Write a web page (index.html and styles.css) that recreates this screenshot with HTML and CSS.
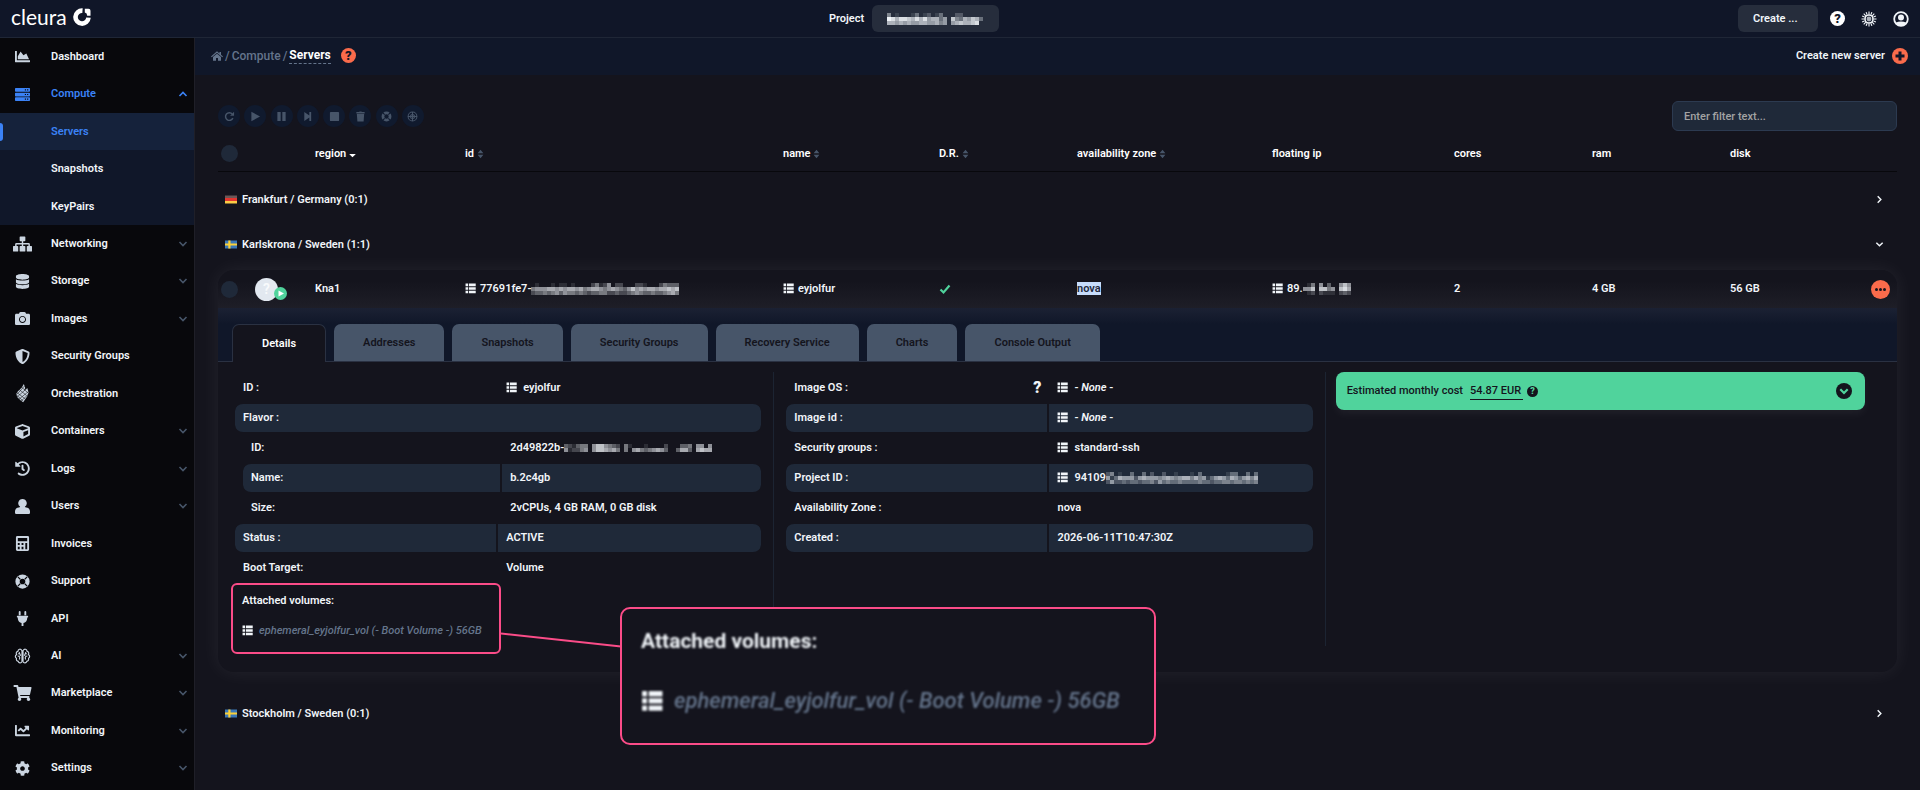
FILE: index.html
```html
<!DOCTYPE html>
<html lang="en">
<head>
    <title>Servers - Cleura</title>
    <meta charset="utf-8">

    <link rel="stylesheet" href="styles.css">
</head>

<body>
<svg class="sprite" aria-hidden="true">
    <symbol id="i-area" viewBox="0 0 512 512"><path d="M500 384c6.600 0 12 5.400 12 12v40c0 6.600-5.400 12-12 12H12c-6.600 0-12-5.400-12-12V76c0-6.600 5.400-12 12-12h40c6.600 0 12 5.400 12 12v308h436zM372.700 159.500L288 216l-85.300-113.700c-5.100-6.800-15.500-6.300-19.900 1L96 248v104h384l-89.900-187.800c-3.200-6.500-11.400-8.700-17.400-4.700z"/></symbol>
    <symbol id="i-line" viewBox="0 0 512 512"><path d="M496 384H64V80c0-8.840-7.160-16-16-16H16C7.160 64 0 71.160 0 80v336c0 17.670 14.330 32 32 32h464c8.840 0 16-7.160 16-16v-32c0-8.840-7.160-16-16-16zM464 96H345.940c-21.380 0-32.090 25.850-16.970 40.970l32.400 32.400L288 242.750l-73.370-73.370c-12.500-12.500-32.760-12.500-45.250 0l-68.690 68.690c-6.250 6.250-6.250 16.380 0 22.630l22.620 22.620c6.250 6.250 16.380 6.250 22.630 0L192 237.250l73.370 73.370c12.500 12.500 32.760 12.500 45.250 0l96-96 32.400 32.400c15.120 15.120 40.970 4.410 40.970-16.970V112c.010-8.840-7.150-16-15.990-16z"/></symbol>
    <symbol id="i-server" viewBox="0 0 512 512"><path fill-rule="evenodd" d="M24 32h464q24 0 24 24v80q0 24-24 24H24q-24 0-24-24V56q0-24 24-24zM24 192h464q24 0 24 24v80q0 24-24 24H24q-24 0-24-24v-80q0-24 24-24zM24 352h464q24 0 24 24v80q0 24-24 24H24q-24 0-24-24v-80q0-24 24-24zM336 76v40h40V76zM412 76v40h40V76zM336 236v40h40v-40zM412 236v40h40v-40zM336 396v40h40v-40zM412 396v40h40v-40z"/></symbol>
    <symbol id="i-sitemap" viewBox="0 0 640 512"><path d="M248 0h144q24 0 24 24v112q0 24-24 24h-48v64h180q44 0 44 44v52h48q24 0 24 24v144q0 24-24 24H488q-24 0-24-24V344q0-24 24-24h32v-48H344v48h48q24 0 24 24v144q0 24-24 24H248q-24 0-24-24V344q0-24 24-24h48v-48H120v48h32q24 0 24 24v144q0 24-24 24H24q-24 0-24-24V344q0-24 24-24h48v-52q0-44 44-44h180v-64h-48q-24 0-24-24V24q0-24 24-24z"/></symbol>
    <symbol id="i-database" viewBox="0 0 448 512"><path d="M448 73.143v45.714C448 159.143 347.667 192 224 192S0 159.143 0 118.857V73.143C0 32.857 100.333 0 224 0s224 32.857 224 73.143zM448 176v102.857C448 319.143 347.667 352 224 352S0 319.143 0 278.857V176c48.125 33.143 136.208 48.572 224 48.572S399.874 209.143 448 176zm0 160v102.857C448 479.143 347.667 512 224 512S0 479.143 0 438.857V336c48.125 33.143 136.208 48.572 224 48.572S399.874 369.143 448 336z"/></symbol>
    <symbol id="i-camera" viewBox="0 0 512 512"><path d="M512 144v288c0 26.500-21.500 48-48 48H48c-26.500 0-48-21.500-48-48V144c0-26.500 21.500-48 48-48h88l12.300-32.900c7-18.700 24.900-31.100 44.900-31.100h125.500c20 0 37.900 12.400 44.900 31.100L376 96h88c26.500 0 48 21.500 48 48zM376 288c0-66.200-53.800-120-120-120s-120 53.800-120 120 53.800 120 120 120 120-53.800 120-120zm-32 0c0 48.500-39.500 88-88 88s-88-39.500-88-88 39.500-88 88-88 88 39.500 88 88z"/></symbol>
    <symbol id="i-shield" viewBox="0 0 512 512"><path d="M466.500 83.700l-192-80a48.150 48.150 0 0 0-36.900 0l-192 80C27.700 91.100 16 108.600 16 128c0 198.500 114.500 335.700 221.500 380.300 11.800 4.900 25.100 4.900 36.900 0C360.100 472.600 496 349.300 496 128c0-19.400-11.700-36.900-29.500-44.300zM256.100 446.300l-.1-381 175.900 73.300c-3.300 151.400-82.100 261.100-175.800 307.700z"/></symbol>
    <symbol id="i-heat" viewBox="0 0 20 28"><path d="M12 0l2 6-2 4 5-4 2 6-2 6-6 9-4-3-5-5-1-5 2-3 6-6z"/><path d="M5 8l11 9M8 4l10 9M1 12l13 10M2 17l9 8M1 20L17 6M4 23L19 11M7 26l12-11M2 15L13 3" fill="none" stroke="#08080c" stroke-width=".8"/></symbol>
    <symbol id="i-cube" viewBox="0 0 512 512"><path d="M239.100 6.300l-208 78c-18.700 7-31.100 25-31.100 45v225.100c0 18.200 10.300 34.800 26.500 42.900l208 104c13.500 6.800 29.400 6.800 42.900 0l208-104c16.300-8.100 26.500-24.800 26.500-42.900V129.300c0-20-12.400-37.900-31.100-44.900l-208-78C262 2.200 250 2.200 239.100 6.300zM256 68.400l192 72v1.100l-192 78-192-78v-1.100l192-72zm32 356V275.500l160-65v133.900l-160 80z"/></symbol>
    <symbol id="i-history" viewBox="0 0 512 512"><path d="M504 255.531c.253 136.640-111.180 248.372-247.820 248.468-59.015.042-113.223-20.530-155.822-54.911-11.077-8.940-11.905-25.541-1.839-35.607l11.267-11.267c8.609-8.609 22.353-9.551 31.891-1.984C173.062 425.135 212.781 440 256 440c101.705 0 184-82.311 184-184 0-101.705-82.311-184-184-184-48.814 0-93.149 18.969-126.068 49.932l50.754 50.754c10.080 10.080 2.941 27.314-11.313 27.314H24c-8.837 0-16-7.163-16-16V38.627c0-14.254 17.234-21.393 27.314-11.314l49.372 49.372C129.209 34.136 189.552 8 256 8c136.810 0 247.747 110.780 248 247.531zm-180.912 78.784l9.823-12.630c8.138-10.463 6.253-25.542-4.210-33.679L288 256.349V152c0-13.255-10.745-24-24-24h-16c-13.255 0-24 10.745-24 24v135.651l65.409 50.874c10.463 8.137 25.541 6.253 33.679-4.210z"/></symbol>
    <symbol id="i-user" viewBox="0 0 512 512"><path d="M256 0a144 144 0 0 1 80 264q10 24 50 28c80 10 126 60 126 136v44q0 40-40 40H40q-40 0-40-40v-44c0-76 46-126 126-136q40-4 50-28A144 144 0 0 1 256 0z"/></symbol>
    <symbol id="i-calc" viewBox="0 0 448 512"><path fill-rule="evenodd" d="M48 0h352q48 0 48 48v416q0 48-48 48H48q-48 0-48-48V48Q0 0 48 0zM64 64v112h320V64zM64 240v64h64v-64zM192 240v64h64v-64zM320 240v208h64V240zM64 368v80h64v-80zM192 368v80h64v-80z"/></symbol>
    <symbol id="i-ring" viewBox="0 0 16 16"><circle cx="8" cy="8" r="5.300" fill="none" stroke="currentColor" stroke-width="4.600"/><path d="M3 3l2.600 2.600M13 3l-2.600 2.600M3 13l2.600-2.600M13 13l-2.600-2.600" stroke="#08080c" stroke-width="1.200"/></symbol>
    <symbol id="i-plug" viewBox="0 0 384 512"><path d="M96 0q32 0 32 32v112H64V32Q64 0 96 0zM288 0q32 0 32 32v112h-64V32q0-32 32-32zM16 160h352q16 0 16 16v32q0 16-16 16h-16v32c0 78-55 142-128 157v99h-64v-99C87 398 32 334 32 256v-32H16q-16 0-16-16v-32q0-16 16-16z"/></symbol>
    <symbol id="i-brain" viewBox="0 0 18 18"><g fill="none" stroke="currentColor" stroke-width="1.300"><path d="M8.400 2.500v13M9.600 2.500v13M8.400 3C7 .5 4 1 4 3.500 2 4 1.500 6 2.400 7.300.5 8.500.5 10.500 2.200 11.500c-.5 2 .5 3.300 2 3.500.6 2.200 3.200 2.400 4.200.500M9.600 3C11 .5 14 1 14 3.500c2 .5 2.500 2.500 1.600 3.800 1.900 1.200 1.900 3.200.2 4.200.5 2-.5 3.300-2 3.500-.6 2.200-3.200 2.400-4.200.500"/><path d="M5.500 4.500c-.5 2 1.500 2 1 4.500M3.500 9c2 0 3 1 2 4M12.500 4.500c.5 2-1.500 2-1 4.500M14.500 9c-2 0-3 1-2 4M4 6.500h2M12 6.500h2"/></g></symbol>
    <symbol id="i-cart" viewBox="0 0 576 512"><path d="M528.120 301.319l47.273-208C578.806 78.301 567.391 64 551.990 64H159.208l-9.166-44.810C147.758 8.021 137.930 0 126.529 0H24C10.745 0 0 10.745 0 24v16c0 13.255 10.745 24 24 24h69.883l70.248 343.435C147.325 417.100 136 435.222 136 456c0 30.928 25.072 56 56 56s56-25.072 56-56c0-15.674-6.447-29.835-16.824-40h209.647C430.447 426.165 424 440.326 424 456c0 30.928 25.072 56 56 56s56-25.072 56-56c0-22.172-12.888-41.332-31.579-50.405l5.517-24.276c3.413-15.018-8.002-29.319-23.403-29.319H218.117l-6.545-32h293.145c11.206 0 20.920-7.754 23.403-18.681z"/></symbol>
    <symbol id="i-cog" viewBox="0 0 512 512"><path d="M487.400 315.700l-42.600-24.600c4.300-23.200 4.300-47 0-70.200l42.600-24.600c4.900-2.800 7.100-8.600 5.500-14-11.100-35.600-30-67.800-54.700-94.600-3.800-4.100-10-5.100-14.800-2.300L380.800 110c-17.900-15.400-38.500-27.300-60.800-35.100V25.800c0-5.600-3.900-10.500-9.400-11.700-36.700-8.200-74.300-7.800-109.200 0-5.500 1.200-9.400 6.100-9.400 11.700V75c-22.200 7.900-42.800 19.800-60.800 35.100L88.700 85.500c-4.900-2.800-11-1.900-14.800 2.300-24.700 26.700-43.600 58.900-54.700 94.600-1.700 5.400.6 11.200 5.500 14L67.300 221c-4.300 23.200-4.300 47 0 70.200l-42.600 24.600c-4.900 2.800-7.100 8.600-5.500 14 11.100 35.600 30 67.800 54.700 94.600 3.800 4.100 10 5.100 14.800 2.300l42.600-24.600c17.900 15.400 38.500 27.300 60.800 35.100v49.200c0 5.600 3.900 10.500 9.400 11.700 36.700 8.200 74.300 7.800 109.200 0 5.500-1.200 9.400-6.100 9.400-11.700v-49.200c22.200-7.900 42.800-19.800 60.800-35.100l42.600 24.600c4.900 2.800 11 1.900 14.800-2.300 24.700-26.700 43.600-58.900 54.700-94.600 1.500-5.500-.7-11.300-5.600-14.100zM256 336c-44.100 0-80-35.900-80-80s35.900-80 80-80 80 35.900 80 80-35.900 80-80 80z"/></symbol>
    <symbol id="i-chev" viewBox="0 0 10 10"><path d="M1.500 3l3.500 3.500L8.500 3" fill="none" stroke="currentColor" stroke-width="1.600"/></symbol>
    <symbol id="i-list" viewBox="0 0 20 20"><path d="M1 1h4.500v4.800H1zM7 1h12.500v4.800H7zM1 7.500h4.500v4.800H1zM7 7.500h12.500v4.800H7zM1 14h4.500v4.800H1zM7 14h12.500v4.800H7z"/></symbol>
    <symbol id="i-home" viewBox="0 0 18 16"><path d="M9 1L0 8.700l1.100 1.200L9 3.200l7.900 6.700L18 8.700 15 6.200V2h-2.300v2.200zM9 4.500L3 9.600V15h4.500v-4h3v4H15V9.600z"/></symbol>
    <symbol id="i-redo" viewBox="0 0 12 12"><path d="M9.700 7.800A4.200 4.200 0 1 1 9 3.200" fill="none" stroke="currentColor" stroke-width="1.600"/><path d="M11 .8v4.400H6.600z"/></symbol>
    <symbol id="i-play" viewBox="0 0 12 12"><path d="M1.500 .8L11 6l-9.500 5.200z"/></symbol>
    <symbol id="i-pause" viewBox="0 0 12 12"><path d="M1.500 1h3.600v10H1.500zM6.900 1h3.600v10H6.900z"/></symbol>
    <symbol id="i-step" viewBox="0 0 12 12"><path d="M2.500 1l5.500 4V1h2v10H8V7l-5.500 4z"/></symbol>
    <symbol id="i-stop" viewBox="0 0 12 12"><rect x="1" y="1" width="10" height="10" rx="1"/></symbol>
    <symbol id="i-trash" viewBox="0 0 12 12"><path d="M1.500 1.200h3L5 .500h2l.500.700h3V2.700h-9zM2 3.400h8l-.6 8.100H2.600z"/></symbol>
    <symbol id="i-ring2" viewBox="0 0 12 12"><circle cx="6" cy="6" r="3.900" fill="none" stroke="currentColor" stroke-width="3"/><path d="M2 2l2 2M10 2L8 4M2 10l2-2M10 10L8 8" stroke="#101a2e" stroke-width="1.200"/></symbol>
    <symbol id="i-globe" viewBox="0 0 12 12"><g fill="none" stroke="currentColor" stroke-width="1.100"><circle cx="6" cy="6" r="4.800"/><circle cx="6" cy="6" r="2.200"/><path d="M6 1v10M1 6h10"/></g></symbol>
    <symbol id="i-sort" viewBox="0 0 8 12"><path d="M4 1l3.500 4h-7zM4 11L.5 7h7z"/></symbol>
    <symbol id="i-down" viewBox="0 0 8 12"><path d="M4 10L0 6h8z"/></symbol>
    <symbol id="i-check" viewBox="0 0 12 12"><path d="M1.500 6.500l3 3 6-7" fill="none" stroke="currentColor" stroke-width="2.200"/></symbol>
    <symbol id="i-sun" viewBox="0 0 16 16"><circle cx="8" cy="8" r="4" fill="none" stroke="currentColor" stroke-width="1.600"/><circle cx="8" cy="8" r="2.400" opacity=".7"/><path d="M8 .5v3M8 12.500v3M.500 8h3M12.500 8h3M2.700 2.700l2.100 2.100M11.200 11.200l2.100 2.100M2.700 13.300l2.100-2.100M11.200 4.800l2.100-2.100M5.100 1.100l.9 2.400M10 12.500l.9 2.400M1.100 10.900l2.400-.9M12.500 6l2.400-.9M1.100 5.100l2.400.9M12.500 10l2.400.9M5.100 14.900l.9-2.400M10 3.500l.9-2.400" stroke="currentColor" stroke-width="1.100"/></symbol>
    <symbol id="i-account" viewBox="0 0 16 16"><circle cx="8" cy="8" r="6.800" fill="none" stroke="currentColor" stroke-width="1.800"/><circle cx="8" cy="6.500" r="3"/><path d="M2.500 11.800q5.500-2.500 11 0Q12 15 8 15t-5.500-3.200z"/></symbol>
    <symbol id="i-plus" viewBox="0 0 16 16"><circle cx="8" cy="8" r="8" fill="#fa6b4b"/><path d="M8 3.500v9M3.500 8h9" stroke="#101628" stroke-width="3"/></symbol>
    <symbol id="i-expand" viewBox="0 0 16 16"><circle cx="8" cy="8" r="8"/><path d="M4.300 6.300L8 10l3.700-3.700" fill="none" stroke="#50d39c" stroke-width="2.200"/></symbol>
    <symbol id="i-de" viewBox="0 0 12 9"><path fill="#6b5757" d="M0 .5h12v3H0z"/><path fill="#e3352f" d="M0 3h12v3H0z"/><path fill="#fbcb45" d="M0 6h12v2.500H0z"/></symbol>
    <symbol id="i-se" viewBox="0 0 12 9"><path fill="#3a78b8" d="M0 .5h12v8H0z"/><path fill="#fbd037" d="M3.300 .5h2.200v8H3.300zM0 3.400h12v2.200H0z"/></symbol>
</svg>

<header class="topbar">
    <a class="logo" href="#">cleura
        <svg class="logo_mark" viewBox="0 0 18 18"><path d="M9.500 2.600A6.500 6.500 0 1 0 15.500 9.600" fill="none" stroke="#fff" stroke-width="4.600"/><path d="M11.800.8h3.700q2 0 2 2v5h-3.300q0-2.800-2.400-3.200z" fill="#fff"/></svg>
    </a>
    <div class="project">
        <span id="project_label">Project</span>
        <button type="button" class="top_button" aria-labelledby="project_label">
            <span class="mosaic" data-rows="401000130120130002200000 986887686856635074365763 665656556655645056766780"></span>
        </button>
    </div>
    <div class="top_actions">
        <button type="button" class="top_button create">Create ...</button>
        <div class="top_icons">
            <a class="help" href="#">?</a>
            <button type="button" class="plain" aria-label="Theme"><svg class="ic16"><use href="#i-sun"/></svg></button>
            <button type="button" class="plain" aria-label="Account"><svg class="ic16"><use href="#i-account"/></svg></button>
        </div>
    </div>
</header>

<div class="layout">
    <nav class="sidebar">
        <ul class="menu">
            <li><a href="#"><svg><use href="#i-area"/></svg>Dashboard</a></li>
            <li class="open">
                <a href="#"><svg><use href="#i-server"/></svg>Compute<svg class="chev"><use href="#i-chev"/></svg></a>
                <ul class="submenu">
                    <li class="active"><a href="#">Servers</a></li>
                    <li><a href="#">Snapshots</a></li>
                    <li><a href="#">KeyPairs</a></li>
                </ul>
            </li>
            <li><a href="#"><svg class="wide"><use href="#i-sitemap"/></svg>Networking<svg class="chev"><use href="#i-chev"/></svg></a></li>
            <li><a href="#"><svg><use href="#i-database"/></svg>Storage<svg class="chev"><use href="#i-chev"/></svg></a></li>
            <li><a href="#"><svg><use href="#i-camera"/></svg>Images<svg class="chev"><use href="#i-chev"/></svg></a></li>
            <li><a href="#"><svg><use href="#i-shield"/></svg>Security Groups</a></li>
            <li><a href="#"><svg class="wide tall"><use href="#i-heat"/></svg>Orchestration</a></li>
            <li><a href="#"><svg><use href="#i-cube"/></svg>Containers<svg class="chev"><use href="#i-chev"/></svg></a></li>
            <li><a href="#"><svg><use href="#i-history"/></svg>Logs<svg class="chev"><use href="#i-chev"/></svg></a></li>
            <li><a href="#"><svg><use href="#i-user"/></svg>Users<svg class="chev"><use href="#i-chev"/></svg></a></li>
            <li><a href="#"><svg><use href="#i-calc"/></svg>Invoices</a></li>
            <li><a href="#"><svg><use href="#i-ring"/></svg>Support</a></li>
            <li><a href="#"><svg><use href="#i-plug"/></svg>API</a></li>
            <li><a href="#"><svg class="wide"><use href="#i-brain"/></svg>AI<svg class="chev"><use href="#i-chev"/></svg></a></li>
            <li><a href="#"><svg class="wide"><use href="#i-cart"/></svg>Marketplace<svg class="chev"><use href="#i-chev"/></svg></a></li>
            <li><a href="#"><svg><use href="#i-line"/></svg>Monitoring<svg class="chev"><use href="#i-chev"/></svg></a></li>
            <li><a href="#"><svg><use href="#i-cog"/></svg>Settings<svg class="chev"><use href="#i-chev"/></svg></a></li>
        </ul>
    </nav>

    <main>
        <div class="crumbs">
            <a href="#" aria-label="Home"><svg class="home"><use href="#i-home"/></svg></a>
            <span>/</span>
            <a href="#">Compute</a>
            <span>/</span>
            <a href="#" class="current">Servers</a>
            <a href="#" class="help orange">?</a>
            <a href="#" class="new_server">Create new server <svg class="ic16"><use href="#i-plus"/></svg></a>
        </div>

        <div class="content">
            <div class="toolbar">
                <div class="tools">
                    <button type="button" aria-label="Restart"><svg><use href="#i-redo"/></svg></button>
                    <button type="button" aria-label="Start"><svg><use href="#i-play"/></svg></button>
                    <button type="button" aria-label="Pause"><svg><use href="#i-pause"/></svg></button>
                    <button type="button" aria-label="Resume"><svg><use href="#i-step"/></svg></button>
                    <button type="button" aria-label="Stop"><svg><use href="#i-stop"/></svg></button>
                    <button type="button" aria-label="Delete"><svg><use href="#i-trash"/></svg></button>
                    <button type="button" aria-label="Rescue"><svg><use href="#i-ring2"/></svg></button>
                    <button type="button" aria-label="Unrescue"><svg><use href="#i-globe"/></svg></button>
                </div>
                <input type="text" class="filter" placeholder="Enter filter text..." aria-label="Filter">
            </div>

            <table class="servers servers_head">
                <colgroup><col class="c_check"><col class="c_region"><col class="c_id"><col class="c_name"><col class="c_dr"><col class="c_zone"><col class="c_ip"><col class="c_num"><col class="c_num"><col class="c_disk"><col class="c_menu"></colgroup>
                <tr>
                    <th><input type="checkbox" class="tick" aria-label="Select all"></th>
                    <th>region <svg class="sort"><use href="#i-down"/></svg></th>
                    <th>id <svg class="sort dim"><use href="#i-sort"/></svg></th>
                    <th>name <svg class="sort dim"><use href="#i-sort"/></svg></th>
                    <th>D.R. <svg class="sort dim"><use href="#i-sort"/></svg></th>
                    <th>availability zone <svg class="sort dim"><use href="#i-sort"/></svg></th>
                    <th>floating ip</th>
                    <th>cores</th>
                    <th>ram</th>
                    <th>disk</th>
                    <th></th>
                </tr>
            </table>

            <div class="regions">
                <button type="button" class="region"><svg class="flag"><use href="#i-de"/></svg>Frankfurt / Germany (0:1)<svg class="arrow side"><use href="#i-chev"/></svg></button>
                <button type="button" class="region"><svg class="flag"><use href="#i-se"/></svg>Karlskrona / Sweden (1:1)<svg class="arrow"><use href="#i-chev"/></svg></button>

                <section class="card">
                    <table class="servers servers_row">
                        <colgroup><col class="c_check"><col class="c_region"><col class="c_id"><col class="c_name"><col class="c_dr"><col class="c_zone"><col class="c_ip"><col class="c_num"><col class="c_num"><col class="c_disk"><col class="c_menu"></colgroup>
                        <tr>
                            <td>
                                <div class="lead">
                                    <input type="checkbox" class="tick" aria-label="Select eyjolfur">
                                    <span class="avatar">?<svg class="running" viewBox="0 0 13 13"><circle cx="6.500" cy="6.500" r="6.500" fill="#50d39c"/><path d="M4.500 3.500L10 6.500l-5.500 3z" fill="#fff"/></svg></span>
                                </div>
                            </td>
                            <td>Kna1</td>
                            <td><svg class="list"><use href="#i-list"/></svg>77691fe7-<span class="mosaic" data-rows="0100010110100002412502200022100024333 4555665656656456654565435756566566767 2334345354434323344223223454334334564"></span></td>
                            <td><svg class="list"><use href="#i-list"/></svg>eyjolfur</td>
                            <td><svg class="check"><use href="#i-check"/></svg></td>
                            <td><span class="marked">nova</span></td>
                            <td><svg class="list"><use href="#i-list"/></svg>89.<span class="mosaic" data-rows="014050300575 557077450786 012021110232"></span></td>
                            <td>2</td>
                            <td>4 GB</td>
                            <td>56 GB</td>
                            <td><button type="button" class="more" aria-label="Actions"><i></i><i></i><i></i></button></td>
                        </tr>
                    </table>

                    <div class="tabs">
                        <button type="button" class="selected">Details</button>
                        <button type="button">Addresses</button>
                        <button type="button">Snapshots</button>
                        <button type="button">Security Groups</button>
                        <button type="button">Recovery Service</button>
                        <button type="button">Charts</button>
                        <button type="button">Console Output</button>
                    </div>

                    <div class="details">
                        <div class="col">
                            <table class="props">
                                <tr><td>ID :</td><td><svg class="list"><use href="#i-list"/></svg>eyjolfur</td></tr>
                                <tr class="band"><td colspan="2" class="full">Flavor :</td></tr>
                                <tr>
                                    <td colspan="2" class="nest">
                                        <table class="props">
                                            <tr><td>ID:</td><td>2d49822b-<span class="mosaic" data-rows="3213440577543204100010000200033405505 5122450577656404056434565300366306766"></span></td></tr>
                                            <tr class="band"><td>Name:</td><td>b.2c4gb</td></tr>
                                            <tr><td>Size:</td><td>2vCPUs, 4 GB RAM, 0 GB disk</td></tr>
                                        </table>
                                    </td>
                                </tr>
                                <tr class="band"><td>Status :</td><td>ACTIVE</td></tr>
                                <tr><td>Boot Target:</td><td>Volume</td></tr>
                            </table>

                            <div class="volumes">
                                <div class="line">Attached volumes:</div>
                                <div class="line"><svg class="list"><use href="#i-list"/></svg><em>ephemeral_eyjolfur_vol (- Boot Volume -) 56GB</em></div>

                                <!-- enlarged copy of the box, tied to it by a line -->
                                <svg class="connector" viewBox="0 0 120 16"><path d="M0 1.500L120 14.500" stroke="#fb4c88" stroke-width="2"/></svg>
                                <div class="callout">
                                    <div class="line title">Attached volumes:</div>
                                    <div class="line"><svg class="list"><use href="#i-list"/></svg><em>ephemeral_eyjolfur_vol (- Boot Volume -) 56GB</em></div>
                                </div>
                            </div>
                        </div>

                        <div class="col">
                            <table class="props">
                                <tr><td><div class="with_hint">Image OS : <b class="hint">?</b></div></td><td><svg class="list"><use href="#i-list"/></svg>- <i>None</i> -</td></tr>
                                <tr class="band"><td>Image id :</td><td><svg class="list"><use href="#i-list"/></svg>- <i>None</i> -</td></tr>
                                <tr><td>Security groups :</td><td><svg class="list"><use href="#i-list"/></svg>standard-ssh</td></tr>
                                <tr class="band"><td>Project ID :</td><td><svg class="list"><use href="#i-list"/></svg>94109<span class="mosaic" data-rows="24010030030200200100010300000013300303 51365552565554565456646451356536535646 25223233233425343343333433233443443434"></span></td></tr>
                                <tr><td>Availability Zone :</td><td>nova</td></tr>
                                <tr class="band"><td>Created :</td><td>2026-06-11T10:47:30Z</td></tr>
                            </table>
                        </div>

                        <div class="col">
                            <div class="cost">
                                <span>Estimated monthly cost</span>
                                <a href="#" class="price">54.87 EUR</a>
                                <a href="#" class="help small">?</a>
                                <button type="button" class="plain" aria-label="Show cost"><svg class="ic16"><use href="#i-expand"/></svg></button>
                            </div>
                        </div>
                    </div>
                </section>

                <button type="button" class="region"><svg class="flag"><use href="#i-se"/></svg>Stockholm / Sweden (0:1)<svg class="arrow side"><use href="#i-chev"/></svg></button>
            </div>
        </div>
    </main>
</div>

<script>
    // masked values: every digit is one 4px block, 0 is empty and 9 is white
    var masks = document.querySelectorAll(".mosaic");
    for (var m = 0; m < masks.length; m++) {
        var rows = masks[m].dataset.rows.split(" ");
        var blocks = "";
        for (var y = 0; y < rows.length; y++) {
            for (var x = 0; x < rows[y].length; x++) {
                blocks += '<rect x="' + x * 4 + '" y="' + y * 4 + '" width="4" height="4" opacity="' + rows[y][x] / 9 + '"/>';
            }
        }
        masks[m].innerHTML = '<svg width="' + rows[0].length * 4 + '" height="' + rows.length * 4 + '">' + blocks + '</svg>';
    }
</script>
</body>
</html>
```
FILE: styles.css
```css
* {box-sizing: border-box;}
body {
    margin: 0;
    min-height: 100vh;
    display: flex;
    flex-direction: column;
    background-color: #14141d;
    color: #f1f5f9;
    font: 600 11px/16px Roboto, "Liberation Sans", sans-serif;
}
a {color: inherit; text-decoration: none;}
button, input {font: inherit; color: inherit;}
button {padding: 0; border: 0; background: none;}
svg {fill: currentColor; flex: none;}
ul {list-style: none; margin: 0; padding: 0;}
table {border-spacing: 0;}
.sprite {display: none;}
.ic16 {width: 16px; height: 16px; display: block;}
.plain {display: block;}
.mosaic svg {fill: #f1f5f9; vertical-align: middle; shape-rendering: crispEdges;}

/* top bar */
.topbar {
    height: 38px;
    display: grid;
    grid-template-columns: 1fr auto 1fr;
    align-items: center;
    padding: 0 11px;
    background-color: #101628;
    border-bottom: 1px solid #1f2636;
}
.logo {
    display: flex;
    align-items: center;
    gap: 6px;
    padding-bottom: 3px;
    color: #fff;
    font: 400 21px/30px Lato, sans-serif;
}
.logo_mark {width: 18px; height: 18px;}
.project {display: flex; align-items: center; gap: 8px; margin-right: 92px;}
.top_button {
    height: 27px;
    padding: 0 16px 0 15px;
    display: flex;
    align-items: center;
    border-radius: 6px;
    background-color: #262d3c;
}
.create {width: 80px;}
.top_actions {display: flex; align-items: center; justify-content: flex-end; gap: 12px;}
.top_icons {display: flex; align-items: center; gap: 16px;}
.help {
    width: 15px;
    height: 15px;
    border-radius: 50%;
    background-color: #fff;
    color: #101628;
    font-weight: 900;
    font-size: 13px;
    line-height: 15px;
    text-align: center;
}
.help.orange {background-color: #fa6b4b; margin-left: 8px;}
.help.small {width: 11px; height: 11px; font-size: 9px; line-height: 11px; background-color: #14141d; color: #50d39c;}

/* sidebar */
.layout {flex: 1; display: flex;}
.sidebar {
    width: 195px;
    flex: none;
    display: flex;
    padding-bottom: 3px;
    background-color: #08080c;
    border-right: 1px solid #1f1f28;
}
.menu {flex: 1; display: flex; flex-direction: column;}
.menu li {flex: 1; display: flex;}
.menu a {
    flex: 1;
    display: flex;
    align-items: center;
    padding-left: 15px;
}
.menu svg {width: 15px; height: 15px; margin-right: 21px; color: #cbd5e1;}
.menu svg.wide {width: 19px; height: 16px; margin: 0 19px 0 -2px;}
.menu svg.tall {height: 19px;}
.menu svg.chev {width: 10px; height: 10px; margin: 0 6px 0 auto; color: #475569;}
.menu .open {flex: 4; flex-direction: column;}
.open > a, .open > a svg, .open > a svg.chev {color: #3b82f6;}
.open > a svg.chev {transform: rotate(180deg);}
.submenu {flex: 3; display: flex; flex-direction: column; background-color: #101729;}
.submenu a {padding-left: 51px;}
.submenu .active {
    align-items: center;
    background-color: #15223b;
    color: #3b82f6;
}
.submenu .active::before {
    content: "";
    width: 3px;
    height: 18px;
    margin-right: -3px;
    border-radius: 0 3px 3px 0;
    background-color: #3b82f6;
}

/* breadcrumbs */
main {flex: 1; min-width: 0;}
.crumbs {
    height: 37px;
    display: flex;
    align-items: center;
    gap: 2px;
    padding: 0 12px 2px 16px;
    background-color: #101729;
    color: #64748b;
    font-size: 12px;
    font-weight: 500;
}
.home {width: 12px; height: 12px; display: block;}
.current {color: #fff; font-weight: 700; border-bottom: 1px dashed #64748b;}
.new_server {
    margin-left: auto;
    display: flex;
    align-items: center;
    gap: 7px;
    color: #f1f5f9;
    font-size: 11px;
    font-weight: 600;
}

/* toolbar */
.content {padding: 26px 23px;}
.toolbar {display: flex; justify-content: space-between; align-items: center;}
.tools {width: 206px; display: flex; justify-content: space-between;}
.tools button {
    width: 22px;
    height: 22px;
    display: flex;
    align-items: center;
    justify-content: center;
    border-radius: 50%;
    background-color: #101a2e;
    color: #475569;
}
.tools svg {width: 11px; height: 11px;}
.filter {
    width: 225px;
    height: 30px;
    padding: 0 11px;
    border: 1px solid #2c3a50;
    border-radius: 6px;
    background-color: #1f2939;
    font-weight: 500;
}
.filter::placeholder {color: #a3a3a3; opacity: 1;}

/* server list */
.servers {width: 100%; table-layout: fixed; text-align: left;}
.servers th, .servers td {padding: 0; font-weight: inherit; white-space: nowrap;}
.servers_head {height: 37px; margin-top: 4px; color: #fff;}
.servers_head th {padding-top: 1px; border-bottom: 1px solid #08080c;}
.servers_row {height: 38px; background-image: linear-gradient(#14141d 30%, #1e1e27);}
.c_check {width: 97px;}
.c_region {width: 150px;}
.c_id {width: 318px;}
.c_name {width: 156px;}
.c_dr {width: 138px;}
.c_zone {width: 195px;}
.c_ip {width: 182px;}
.c_num {width: 138px;}
.c_disk {width: 141px;}
.c_menu {width: 26px;}
.tick {
    appearance: none;
    display: block;
    width: 17px;
    height: 17px;
    margin: 0 0 0 3px;
    border-radius: 50%;
    background-color: #1f2939;
}
.sort {width: 7px; height: 10px; vertical-align: middle;}
.dim {color: #475569;}
.regions {padding-top: 5px;}
.region {
    width: 100%;
    height: 45px;
    display: flex;
    align-items: center;
    padding: 0 13px 0 7px;
    text-align: left;
}
.flag {width: 12px; height: 9px; margin-right: 5px;}
.arrow {width: 9px; height: 9px; margin-left: auto;}
.arrow.side {transform: rotate(-90deg);}
.card {
    margin: 3px 0 19px;
    border-radius: 16px;
    background-color: #14141d;
    box-shadow: 0 0 20px rgba(255, 255, 255, 0.07);
}
.servers_row {border-radius: 16px 16px 0 0;}
.lead {display: flex; align-items: center;}
.avatar {
    position: relative;
    width: 23px;
    height: 23px;
    margin-left: 17px;
    border-radius: 50%;
    background-color: #e2e8f0;
    color: #f8fafc;
    font-size: 14px;
    line-height: 23px;
    text-align: center;
}
.running {position: absolute; right: -9px; bottom: 1px; width: 13px; height: 13px;}
.list {width: 11px; height: 11px; margin-right: 4px; vertical-align: -2px;}
.check {width: 12px; height: 12px; color: #50d39c; vertical-align: middle;}
.marked {background-color: #c7dcfb; color: #1e293b;}
.more {
    width: 19px;
    height: 19px;
    display: flex;
    align-items: center;
    justify-content: center;
    gap: 1px;
    border-radius: 50%;
    background-color: #fa6b4b;
}
.more i {width: 3px; height: 3px; border-radius: 50%; background-color: #14141d;}

/* tabs */
.tabs {
    display: flex;
    gap: 8px;
    padding: 16px 14px 0;
    border-bottom: 1px solid #2a3142;
    background-image: linear-gradient(#1b2133, #101729 16px);
}
.tabs button {
    height: 37px;
    padding: 0 29px;
    border-radius: 7px 7px 0 0;
    background-color: #475569;
    color: #14141d;
}
.tabs .selected {
    height: 38px;
    margin-bottom: -1px;
    border: 1px solid #2a3142;
    border-bottom: 0;
    background-color: #14141d;
    color: #fff;
}

/* details */
.details {
    display: grid;
    grid-template-columns: repeat(3, 1fr);
    padding: 10px 20px 26px 5px;
}
.col {padding: 1px 12px 0; border-right: 1px solid #1c2432;}
.col:last-child {border-right: 0; padding: 0 12px 0 10px;}
.props {width: 100%; table-layout: fixed;}
.props td {
    height: 30px;
    padding: 0 8px;
    border: 1px solid transparent;
    border-width: 1px 0;
    background-clip: padding-box;
    white-space: nowrap;
}
.props .list, .volumes .list {margin-right: 6px;}
.props .band td {background-color: #1f2939;}
.props .band td:first-child {border-right-width: 2px; border-radius: 8px 0 0 8px;}
.props .band td:last-child {border-radius: 0 8px 8px 0;}
.props .band td.full {border-right-width: 0; border-radius: 8px;}
.props td.nest {padding: 0 0 0 8px; border: 0;}
.with_hint {display: flex; justify-content: space-between;}
.hint {font-size: 16px;}
.volumes {
    position: relative;
    width: 270px;
    margin: 0 0 -8px -4px;
    padding: 1px 9px 6px;
    border: 2px solid #fb4c88;
    border-radius: 6px;
    white-space: nowrap;
}
.line {line-height: 30px;}
.line em {color: #64748b; font-weight: 500;}
.connector {position: absolute; left: 268px; top: 47px; width: 120px; height: 16px;}
.callout {
    position: absolute;
    left: 387px;
    top: 22px;
    width: 536px;
    padding: 2px 19px 12px;
    border: 2px solid #fb4c88;
    border-radius: 10px;
    background-color: #14141d;
    font-size: 22px;
}
.callout .line {line-height: 60px; filter: blur(1px);}
.callout .title {font-size: 21px; font-weight: 700;}
.callout .list {width: 22px; height: 22px; margin-right: 11px; vertical-align: -4px;}
.cost {
    height: 38px;
    display: flex;
    align-items: center;
    padding: 0 13px 0 11px;
    border-radius: 8px;
    background-color: #50d39c;
    box-shadow: 0 4px 10px rgba(255, 255, 255, 0.05);
    color: #14141d;
    font-weight: 500;
}
.price {margin: 0 4px 0 7px; padding-right: 2px; border-bottom: 1px solid #14141d;}
.cost .plain {margin-left: auto;}
```
